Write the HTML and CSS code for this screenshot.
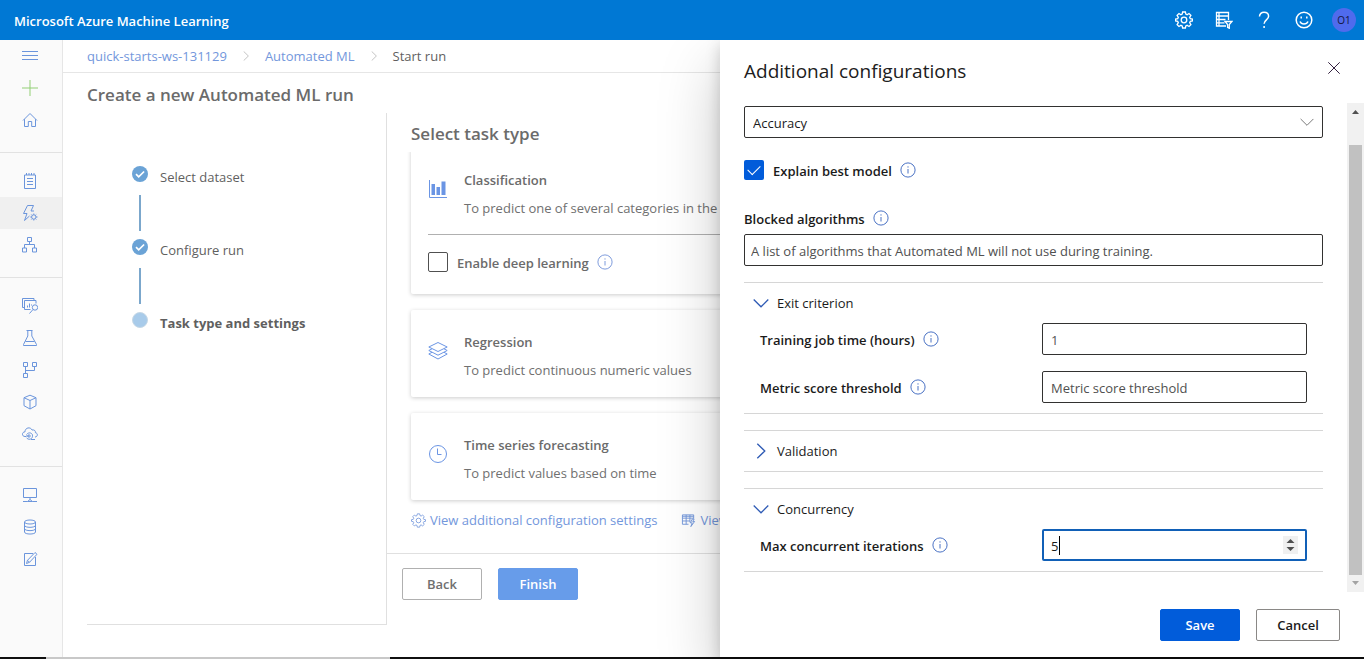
FILE: index.html
```html
<!DOCTYPE html>
<html lang="en">
<head>
<meta charset="utf-8">
<title>Microsoft Azure Machine Learning</title>
<meta name="viewport" content="width=device-width, initial-scale=1">
<link rel="stylesheet" href="styles.css">
</head>
<body>
<svg class="defs" aria-hidden="true">
  <symbol id="i-info" viewBox="0 0 16 16"><circle cx="8" cy="8" r="7.1"/><path d="M8 7v4.500M8 4.300v1.300"/></symbol>
  <symbol id="i-gear" viewBox="0 0 18 18"><path d="M7.600 1h2.800l.4 2.100 1.300.6 1.900-1.200 1.900 1.900-1.200 1.900.6 1.300 2.100.4v2l-2.100.4-.6 1.300 1.200 1.900-1.900 1.900-1.900-1.200-1.300.6-.4 2.100H7.600l-.4-2.100-1.300-.6L4 15.500 2.100 13.600l1.200-1.900-.6-1.300L.6 10V8l2.100-.4.6-1.300L2.100 4.400 4 2.500l1.900 1.200 1.300-.6z"/><circle cx="9" cy="9" r="2.800"/></symbol>
  <symbol id="i-down" viewBox="0 0 16 16"><path d="M.7 4.500 8 11.800l7.300-7.300"/></symbol>
  <symbol id="i-right" viewBox="0 0 16 16"><path d="M4.300.7l7.500 7.300-7.500 7.300"/></symbol>
  <symbol id="i-done" viewBox="0 0 16 16"><circle cx="8" cy="8" r="8" fill="#6ba3d6" stroke="none"/><path d="M4 8.200l2.700 2.700 5.400-5.400" stroke="#fff" stroke-width="1.700"/></symbol>
</svg>

<header class="topbar">
  <span class="brand">Microsoft Azure Machine Learning</span>
  <div class="tools">
    <button class="tool" aria-label="Settings"><svg class="ico18"><use href="#i-gear"/></svg></button>
    <button class="tool" aria-label="Directory filter"><svg class="ico18" viewBox="0 0 18 18"><path d="M11 15H1.500V1.500h12V9M1.500 5h12M1.500 8.500h9M1.500 11.800h8M4 1.500V15"/><path d="M10 10.500h7l-2.700 3v3.800l-1.700-1v-2.800z"/></svg></button>
    <button class="tool" aria-label="Help"><svg class="ico18" viewBox="0 0 18 18"><path class="thick" d="M4.500 5.500C4.500 2.800 6.500 1.200 9 1.200s4.600 1.500 4.600 4c0 3.600-4.500 3.800-4.500 7.600M9.100 15v2"/></svg></button>
    <button class="tool" aria-label="Feedback"><svg class="ico18" viewBox="0 0 18 18"><circle class="thick" cx="9" cy="9" r="7.800"/><path class="thick" d="M5 10.500c1.400 3.400 6.600 3.400 8 0M6.200 5.500v2M11.800 5.500v2"/></svg></button>
    <button class="avatar">O1</button>
  </div>
</header>

<div class="app">
  <nav class="rail" aria-label="Main">
    <div class="group">
      <a href="#" aria-label="Menu"><svg viewBox="0 0 16 16"><path d="M0 3.500h16M0 7.500h16M0 11.500h16"/></svg></a>
      <a href="#" aria-label="New" class="new"><svg viewBox="0 0 16 16"><path d="M8 0v16M0 8h16"/></svg></a>
      <a href="#" aria-label="Home"><svg viewBox="0 0 16 16"><path d="M1 8.500 8 1.500l7 7M2.500 7.200v7.300h3.800V9.500h3.400v5h3.800V7.200"/></svg></a>
    </div>
    <div class="group">
      <a href="#" aria-label="Notebooks"><svg viewBox="0 0 16 16"><path d="M2.500 2h11v13.500h-11zM4.500 0v2M7 0v2M9.500 0v2M12 0v2M5 5.500h6M5 8.500h6M5 11.500h6"/></svg></a>
      <a href="#" aria-label="Automated ML" class="on"><svg viewBox="0 0 16 16"><path d="M5.500.5h6L9 6h3M5.500.5l-4 8H5L2.500 15.500 7.500 11"/><circle cx="11.800" cy="12" r="2.200"/><path d="M11.800 8.500v1.300M11.800 14.200v1.300M8.300 12h1.300M14 12h1.500M9.300 9.500l.9.900M13.400 13.600l.9.900M9.300 14.500l.9-.9M13.400 10.400l.9-.9"/></svg></a>
      <a href="#" aria-label="Designer"><svg viewBox="0 0 16 16"><path d="M5.500.5h4v4h-4zM.5 11h4v4h-4zM10.500 11h4v4h-4zM7.500 4.500v3M2.500 11V7.500h10V11"/></svg></a>
    </div>
    <div class="group">
      <a href="#" aria-label="Datasets"><svg viewBox="0 0 16 16"><path d="M2.500 9.500H.5v-9h11.500v2M8.500 11.500h-6v-9h11.500v3M5.500 9.500v-2M7.500 9.500v-4M9.500 7.500v-1"/><circle cx="13" cy="9.500" r="2.700"/><path d="M11 11.500 7.500 15.500"/></svg></a>
      <a href="#" aria-label="Experiments"><svg viewBox="0 0 16 16"><path d="M4.500.5h6M5.800.5v5.500L1.500 14.500v1h13v-1L9.800 6V.5M3.500 11.500h9"/></svg></a>
      <a href="#" aria-label="Pipelines"><svg viewBox="0 0 16 16"><path d="M1.500.5h4v4h-4zM10.500.5h4v4h-4zM1.500 11.500h4v4h-4zM3.500 4.500v7M3.500 8.500h9v-4"/></svg></a>
      <a href="#" aria-label="Models"><svg viewBox="0 0 16 16"><path d="M8 1.200l6 2.500v8L8 15l-6-3.300v-8zM2 3.700l6 2.800 6-2.800M8 6.500V15"/></svg></a>
      <a href="#" aria-label="Endpoints"><svg viewBox="0 0 16 16"><path d="M4 10.500H3C-.4 10.500-.4 6 3 5.800 3 1.500 8.500.5 10 4c2.500-.5 3.700 1 3.400 2.700 2.800.4 2.500 4.300-.4 4.300"/><path d="M4.500 8.500c2.500-3 6.500-1.500 6 1.800-.4 3.500-4.500 3.800-6 1.400"/><circle cx="7" cy="10" r="1.200"/><path d="M4 10h3M9 13.500h4"/></svg></a>
    </div>
    <div class="group">
      <a href="#" aria-label="Compute"><svg viewBox="0 0 16 16"><path d="M1.500 1.500h13v9h-13zM8 10.500v2M1 14.500h4.500M10.500 14.500H15M5.500 14.500L8 12.500l2.500 2z"/></svg></a>
      <a href="#" aria-label="Datastores"><svg viewBox="0 0 16 16"><ellipse cx="8" cy="3" rx="5.500" ry="2"/><path d="M2.500 3v10c0 2.700 11 2.700 11 0V3M2.500 6.300c0 2.700 11 2.700 11 0M2.500 9.600c0 2.700 11 2.700 11 0"/></svg></a>
      <a href="#" aria-label="Data labeling"><svg viewBox="0 0 16 16"><path d="M11 2.500H2.500v12h11V6M4.500 12.500l1-3.200L13 1.500l2 1.800-7.500 8zM5.500 9.300l2 2"/></svg></a>
    </div>
  </nav>

  <main class="main">
    <nav class="crumbs" aria-label="Breadcrumb">
      <a href="#">quick-starts-ws-131129</a>
      <svg class="sep"><use href="#i-right"/></svg>
      <a href="#">Automated ML</a>
      <svg class="sep"><use href="#i-right"/></svg>
      <span>Start run</span>
    </nav>
    <h1>Create a new Automated ML run</h1>
    <div class="wizard">
      <ol class="steps">
        <li><svg class="mark"><use href="#i-done"/></svg><span>Select dataset</span></li>
        <li><svg class="mark"><use href="#i-done"/></svg><span>Configure run</span></li>
        <li class="current"><i class="mark"></i><span>Task type and settings</span></li>
      </ol>
      <section class="task">
        <div class="body">
          <h2>Select task type</h2>
          <article class="card">
            <svg class="pic" viewBox="0 0 20 20"><path d="M1.500 1v17.500H19"/><path class="solid" d="M3.500 5h3.500v11H3.500zM8.500 8h3.500v8H8.500zM13.500 2.500h4V16h-4z"/></svg>
            <div class="text"><h3>Classification</h3><p>To predict one of several categories in the</p></div>
            <div class="extra">
              <input type="checkbox" id="deep"><label for="deep">Enable deep learning</label>
              <svg class="info"><use href="#i-info"/></svg>
            </div>
          </article>
          <article class="card">
            <svg class="pic" viewBox="0 0 20 20"><path d="M10 1.500l9.200 4.500L10 10.500.8 6zM4 7.800L.8 9.500l9.200 4.700 9.200-4.700L16 7.800M4 11.300L.8 13l9.200 5 9.200-5-3.200-1.700"/></svg>
            <div class="text"><h3>Regression</h3><p>To predict continuous numeric values</p></div>
          </article>
          <article class="card">
            <svg class="pic" viewBox="0 0 20 20"><circle cx="10" cy="10" r="8.500"/><path d="M9.500 4.500V10.500h4"/></svg>
            <div class="text"><h3>Time series forecasting</h3><p>To predict values based on time</p></div>
          </article>
          <div class="links">
            <a href="#"><svg><use href="#i-gear"/></svg>View additional configuration settings</a>
            <a href="#"><svg viewBox="0 0 16 16"><path d="M8 12H1.500V2h12v4M1.500 5.500h12M1.500 8.500h8M5.500 2v10M9.500 2v8M1.500 3.500h12M12 6.500l-2 4h2l-1.500 4 4-5.500h-2l1.500-2.500z"/></svg>View</a>
          </div>
        </div>
        <div class="actions">
          <button class="btn faded">Back</button>
          <button class="btn primary-faded">Finish</button>
        </div>
      </section>
    </div>
  </main>

  <aside class="panel" aria-label="Additional configurations">
    <header class="panel-head">
      <h2>Additional configurations</h2>
      <button class="close" aria-label="Close"><svg viewBox="0 0 12 12"><path d="M.3.3l11.400 11.400M11.700.3.3 11.700"/></svg></button>
    </header>
    <div class="scroll">
      <form class="form">
        <div class="pick">
          <select aria-label="Primary metric"><option>Accuracy</option></select>
          <svg viewBox="0 0 16 16"><use href="#i-down"/></svg>
        </div>
        <div class="check">
          <input type="checkbox" id="explain" checked><label for="explain">Explain best model</label>
          <svg class="info"><use href="#i-info"/></svg>
        </div>
        <div class="caption"><label for="blocked">Blocked algorithms</label><svg class="info"><use href="#i-info"/></svg></div>
        <input class="field tight" id="blocked" type="text" placeholder="A list of algorithms that Automated ML will not use during training.">

        <section class="fold">
          <button type="button" class="fold-head"><svg><use href="#i-down"/></svg>Exit criterion</button>
          <div class="rows">
            <div class="row"><div class="name"><label for="hours">Training job time (hours)</label><svg class="info"><use href="#i-info"/></svg></div><input class="field muted" id="hours" type="text" value="1"></div>
            <div class="row"><div class="name"><label for="score">Metric score threshold</label><svg class="info"><use href="#i-info"/></svg></div><input class="field" id="score" type="text" placeholder="Metric score threshold"></div>
          </div>
        </section>
        <section class="fold">
          <button type="button" class="fold-head"><svg><use href="#i-right"/></svg>Validation</button>
        </section>
        <section class="fold">
          <button type="button" class="fold-head"><svg><use href="#i-down"/></svg>Concurrency</button>
          <div class="rows">
            <div class="row"><div class="name"><label for="iter">Max concurrent iterations</label><svg class="info"><use href="#i-info"/></svg></div>
              <div class="spin"><input class="field active" id="iter" type="number" value="5"><i class="caret"></i><svg class="arrows" viewBox="0 0 15 18"><path d="M3.500 7 7.500 3l4 4zM3.500 11l4 4 4-4z"/></svg></div>
            </div>
          </div>
        </section>
      </form>
      <div class="bar" aria-hidden="true">
        <svg viewBox="0 0 17 17"><path d="M5 11l3.500-4 3.500 4z" fill="#505050"/></svg>
        <i class="thumb"></i>
        <svg viewBox="0 0 17 17"><path d="M5 6l3.500 4L12 6z" fill="#a3a3a3"/></svg>
      </div>
    </div>
    <footer class="panel-foot">
      <button class="btn primary">Save</button>
      <button class="btn wide">Cancel</button>
    </footer>
  </aside>
</div>
<div class="edge"><i></i></div>
</body>
</html>
```
FILE: styles.css
```css
* { box-sizing: border-box; }
body {
  margin: 0;
  min-height: 100vh;
  display: flex;
  flex-direction: column;
  font: 13px/20px "Open Sans", "Noto Sans", sans-serif;
  color: #5f5f5f;
  background: #fff;
  overflow: hidden;
}
h1, h2, h3, p, ol { margin: 0; padding: 0; font-weight: 400; }
a { color: #7397dc; text-decoration: none; }
button, input, select { font: inherit; }
button { border: 0; background: none; padding: 0; cursor: pointer; }
label { padding-top: 2px; }
svg { fill: none; stroke: currentColor; stroke-width: 1; flex: none; display: block; }
.defs { position: absolute; width: 0; height: 0; }

.topbar {
  height: 40px;
  padding: 2px 8px 0 14px;
  display: flex;
  align-items: center;
  justify-content: space-between;
  background: #0078d4;
  color: #fff;
  position: relative;
  z-index: 2;
}
.brand { font-weight: 600; }
.tools { display: flex; align-items: center; gap: 16px; height: 36px; margin-bottom: 2px; }
.tool { width: 24px; height: 24px; display: grid; place-items: center; color: #fff; }
.ico18 { width: 18px; height: 18px; stroke-width: 1.3; }
.thick { stroke-width: 1.5; }
.avatar { width: 24px; height: 24px; border-radius: 50%; background: #4f6bed; color: #14143c; font-size: 10px; font-weight: 500; }

.app { flex: 1; display: flex; position: relative; }
.rail { width: 63px; flex: none; background: #fafafa; border-right: 1px solid #e6e6e6; }
.group { padding: 12px 0 16px; border-bottom: 1px solid #e2e2e2; }
.group:first-child { padding-top: 0; }
.group:last-child { border-bottom: 0; }
.group a { height: 32px; display: flex; align-items: center; padding-left: 22px; color: #6b95dc; }
.group svg { width: 16px; height: 16px; }
.group .new { color: #92cf74; }
.group .on { background: #f0f0f0; }

.main { flex: 1; min-width: 0; display: flex; flex-direction: column; }
.crumbs { display: flex; align-items: center; gap: 14px; height: 33px; padding-left: 24px; border-bottom: 1px solid #e6e6e6; }
.sep { width: 10px; height: 10px; color: #a0a0a0; }
.sep use { width: 10px; height: 10px; }
h1 { padding: 10px 24px 6px; font-size: 17px; line-height: 24px; font-weight: 600; color: #6b6b6b; }
.wizard { flex: 1; display: flex; margin: 0 24px 32px; }
.steps { width: 300px; flex: none; list-style: none; padding: 53px 0 0 45px; border: 1px solid #e0e0e0; border-width: 0 1px 1px 0; }
.steps li { display: grid; grid-template-columns: 16px 1fr; column-gap: 12px; height: 73px; align-content: start; }
.steps li:not(.current)::after { content: ""; width: 2px; height: 36px; margin: 7px 0 0 7px; background: #7ba7cc; }
.steps span { line-height: 22px; }
.mark { width: 16px; height: 16px; }
i.mark { border-radius: 50%; background: #a8cbea; border: 1px solid #c6d8e6; }
.steps .current { font-weight: 700; }

.task { flex: 1; min-width: 0; display: flex; flex-direction: column; }
.body { flex: 1; padding: 7px 24px 0; }
.body h2 { font-size: 17px; line-height: 28px; font-weight: 600; color: #6b6b6b; }
.card {
  display: grid;
  grid-template-columns: 20px 1fr;
  column-gap: 16px;
  align-items: start;
  padding: 18px 17px 13px;
  margin-bottom: 16px;
  border-radius: 2px;
  box-shadow: 0 1px 4px rgba(0, 0, 0, .2);
}
.card:nth-of-type(1) { clip-path: inset(4px -8px -8px -8px); }
.card h3, .card p { font-size: 13px; line-height: 28px; white-space: nowrap; }
.card h3 { font-weight: 600; color: #6b6b6b; }
.card p { color: #707070; }
.text { min-width: 0; }
.pic { width: 20px; height: 20px; margin-top: 13px; color: #6b95e4; }
.solid { fill: currentColor; stroke: none; }
.extra { grid-column: 1 / -1; display: flex; align-items: center; margin-top: 12px; padding: 16px 0 8px; border-top: 1px solid #b0b0b0; font-weight: 600; color: #6b6b6b; }
.info { width: 16px; height: 16px; margin-left: 8px; color: #4a72c4; }
.main .info { color: #7f9cdc; }
input[type="checkbox"] { appearance: none; width: 20px; height: 20px; margin: 0 9px 0 0; border: 1px solid #505050; border-radius: 2px; }
#explain {
  border: 0;
  background: #015cda;
  display: grid;
  place-items: center;
}
#explain::before { content: ""; width: 11px; height: 6px; border: solid #fff; border-width: 0 0 1px 1px; rotate: -45deg; translate: 0 -2px; }
.links { display: flex; gap: 24px; white-space: nowrap; margin-top: -6px; }
.links a { display: flex; align-items: center; gap: 4px; line-height: 20px; }
.links svg { width: 15px; height: 15px; }
.actions { display: flex; gap: 16px; height: 72px; padding: 14px 15px 0; border-top: 1px solid #e0e0e0; }
.btn { height: 32px; width: 80px; border: 1px solid #8a8886; border-radius: 2px; background: #fff; color: #1b1b1b; font-weight: 600; }
.wide { width: 84px; }
.faded { color: #707070; border-color: #b0b0b0; }
.primary { background: #015cda; border-color: #015cda; color: #fff; }
.primary-faded { background: #679cea; border-color: #679cea; color: #fff; }

.panel {
  position: absolute;
  top: 0;
  right: 0;
  bottom: 0;
  width: 644px;
  display: flex;
  flex-direction: column;
  background: #fff;
  color: #1b1b1b;
  box-shadow: 0 26px 58px rgba(0, 0, 0, .22), 0 5px 14px rgba(0, 0, 0, .18);
}
.panel-head { display: flex; justify-content: space-between; padding: 16px 24px 17px; }
.panel-head h2 { font-size: 19px; line-height: 30px; color: #202020; }
.close { width: 12px; height: 24px; display: grid; place-items: center; color: #33203f; }
.close svg { width: 12px; height: 12px; }
.scroll { flex: 1; display: flex; justify-content: space-between; gap: 24px; padding-left: 24px; }
.form { flex: 1; padding-top: 3px; }
.bar { width: 17px; display: flex; flex-direction: column; background: #f1f1f1; }
.bar svg { width: 17px; height: 17px; stroke: none; }
.thumb { flex: 1; margin: 25px 2px 0; background: #c1c1c1; }
.pick { position: relative; }
.pick select { appearance: none; width: 100%; height: 32px; padding: 2px 8px 0; border: 1px solid #323130; border-radius: 2px; background: #fff; color: #1b1b1b; }
.pick svg { position: absolute; right: 9px; top: 9px; width: 14px; height: 14px; color: #666; }
.check { display: flex; align-items: center; height: 20px; margin-top: 22px; font-weight: 600; }
.caption { display: flex; align-items: center; height: 20px; margin: 28px 0 6px; font-weight: 600; }
.field { width: 100%; height: 32px; padding: 2px 8px 0; border: 1px solid #323130; border-radius: 2px; background: #fff; color: #1b1b1b; outline: 0; }
.field::placeholder { color: #505050; opacity: 1; }
.tight { padding: 2px 6px 0; }
.muted { color: #555; }
.fold { margin-top: 16px; border: 1px solid #d6d6d6; border-width: 1px 0; }
.fold-head { display: flex; align-items: center; gap: 8px; height: 40px; width: 100%; padding-left: 9px; color: #1b1b1b; }
.fold-head svg { width: 16px; height: 16px; color: #2f5bb5; stroke-width: 1.3; }
.rows { display: grid; gap: 16px; padding: 0 16px 10px; }
.row { display: grid; grid-template-columns: minmax(0, 1fr) 265px; align-items: center; }
.name { display: flex; align-items: center; font-weight: 600; }
.spin { position: relative; }
.active { border: 2px solid #1160b7; padding: 2px 7px 0; appearance: textfield; display: block; }
.active::-webkit-inner-spin-button { appearance: none; }
.caret { position: absolute; left: 17px; top: 7px; width: 1px; height: 19px; background: #000; }
.arrows { position: absolute; right: 9px; top: 7px; width: 15px; height: 18px; background: #f0f0f0; fill: #505050; stroke: none; }
.panel-foot { display: flex; justify-content: flex-end; gap: 16px; padding: 17px 24px 16px; }
.edge { height: 2px; background: #101010; }
.edge i { display: block; width: 344px; height: 2px; margin-left: 46px; background: #c8c8c8; }
```
